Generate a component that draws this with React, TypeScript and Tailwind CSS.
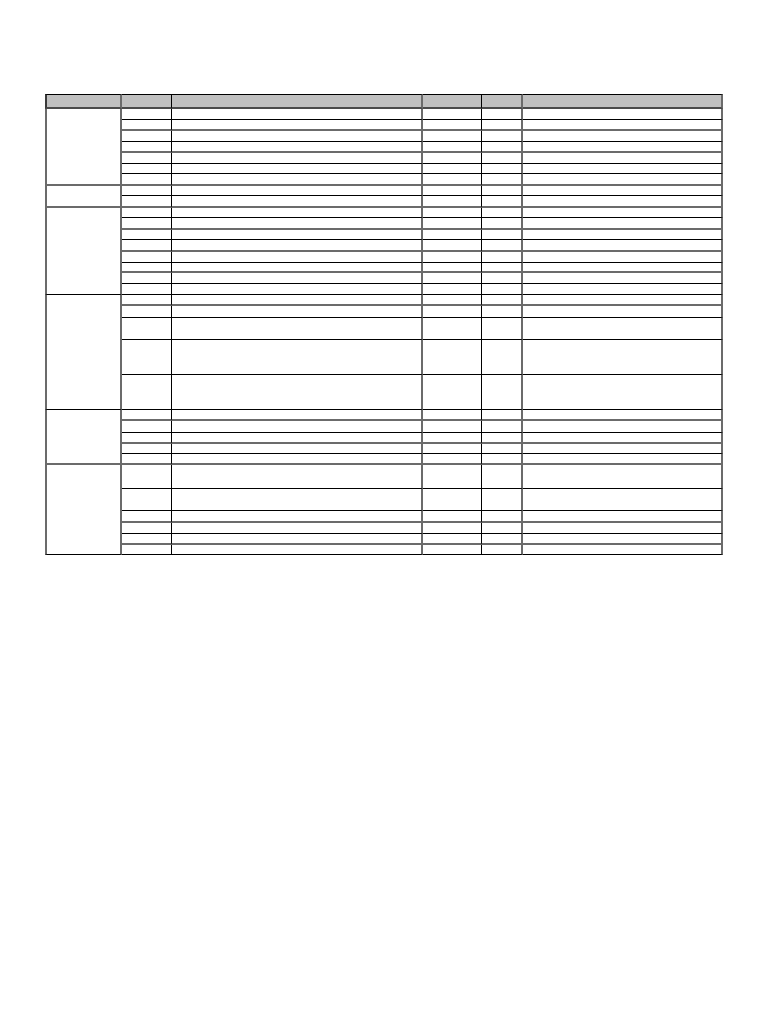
import React from 'react';

type Line = 'b' | 'g';

interface Row {
  h: string;
  line: Line;
}

interface Group {
  span: string;
  line: Line;
  rows: Row[];
}

const lineClass: Record<Line, string> = {
  b: 'border-b border-b-black',
  g: 'border-b-2 border-b-[#6b6b6b]',
};

// right-hand border of each column after the first
const colClass = [
  'border-r border-r-black',
  'border-r-2 border-r-[#6b6b6b]',
  'border-r border-r-black',
  'border-r-2 border-r-[#6b6b6b]',
  'border-r-2 border-r-[#6b6b6b]',
];

const firstCol = 'border-l-2 border-l-[#6b6b6b] border-r-2 border-r-[#6b6b6b]';

const groups: Group[] = [
  {
    span: 'row-span-7',
    line: 'g',
    rows: [
      { h: 'h-[11px]', line: 'b' },
      { h: 'h-[11px]', line: 'g' },
      { h: 'h-[11px]', line: 'b' },
      { h: 'h-[11px]', line: 'g' },
      { h: 'h-[11px]', line: 'b' },
      { h: 'h-[10px]', line: 'b' },
      { h: 'h-[12px]', line: 'g' },
    ],
  },
  {
    span: 'row-span-2',
    line: 'g',
    rows: [
      { h: 'h-[10px]', line: 'b' },
      { h: 'h-[12px]', line: 'g' },
    ],
  },
  {
    span: 'row-span-8',
    line: 'b',
    rows: [
      { h: 'h-[10px]', line: 'b' },
      { h: 'h-[12px]', line: 'g' },
      { h: 'h-[10px]', line: 'b' },
      { h: 'h-[12px]', line: 'g' },
      { h: 'h-[11px]', line: 'b' },
      { h: 'h-[10px]', line: 'g' },
      { h: 'h-[11px]', line: 'b' },
      { h: 'h-[11px]', line: 'b' },
    ],
  },
  {
    span: 'row-span-5',
    line: 'b',
    rows: [
      { h: 'h-[11px]', line: 'g' },
      { h: 'h-[12px]', line: 'b' },
      { h: 'h-[22px]', line: 'b' },
      { h: 'h-[35px]', line: 'b' },
      { h: 'h-[35px]', line: 'b' },
    ],
  },
  {
    span: 'row-span-5',
    line: 'g',
    rows: [
      { h: 'h-[11px]', line: 'g' },
      { h: 'h-[12px]', line: 'b' },
      { h: 'h-[11px]', line: 'g' },
      { h: 'h-[10px]', line: 'b' },
      { h: 'h-[11px]', line: 'g' },
    ],
  },
  {
    span: 'row-span-6',
    line: 'b',
    rows: [
      { h: 'h-[24px]', line: 'b' },
      { h: 'h-[22px]', line: 'b' },
      { h: 'h-[12px]', line: 'g' },
      { h: 'h-[11px]', line: 'b' },
      { h: 'h-[11px]', line: 'g' },
      { h: 'h-[10px]', line: 'b' },
    ],
  },
];

export default function App() {
  return (
    <div className="min-h-screen bg-white pt-[94px] pl-[45px]" style={{ fontFamily: '"Liberation Sans", Arial, sans-serif' }}>
      <div className="grid w-[678px] grid-cols-[77px_50px_251px_59px_41px_200px]">
        {/* header */}
        <div className="h-[15px] bg-[#c0c0c0] border-t border-t-black border-b-2 border-b-[#4a4a4a] border-l-2 border-l-[#3a3a3a] border-r-2 border-r-[#6b6b6b]" />
        {colClass.map((c, i) => (
          <div key={i} className={`h-[15px] bg-[#c0c0c0] border-t border-t-black border-b-2 border-b-[#4a4a4a] ${c}`} />
        ))}

        {groups.map((g, gi) => (
          <React.Fragment key={gi}>
            <div className={`${g.span} ${firstCol} ${lineClass[g.line]}`} />
            {g.rows.map((r, ri) =>
              colClass.map((c, ci) => (
                <div key={`${ri}-${ci}`} className={`${r.h} ${c} ${lineClass[r.line]}`} />
              ))
            )}
          </React.Fragment>
        ))}
      </div>
    </div>
  );
}
